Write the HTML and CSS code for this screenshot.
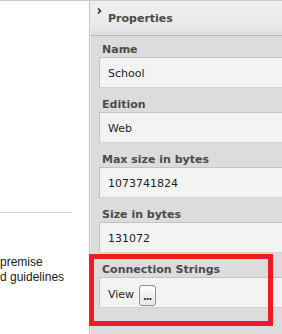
FILE: index.html
```html
<!DOCTYPE html>
<html>
<head>
<meta charset="utf-8">
<link rel="stylesheet" href="styles.css">
</head>
<body>
<div class="page">
  <div class="left">
    <div class="rule"></div>
    <p class="blurb">premise<br>d guidelines</p>
  </div>
  <div class="panel">
    <div class="panel-head">
      <svg class="chev" width="5" height="6" viewBox="0 0 5 6"><path d="M1 0.5 L3.5 3 L1 5.5" fill="none" stroke="#333" stroke-width="1.6"/></svg>
      <span class="title">Properties</span>
    </div>
    <div class="rows">
      <div class="row">
        <div class="label">Name</div>
        <div class="value">School</div>
      </div>
      <div class="row">
        <div class="label">Edition</div>
        <div class="value">Web</div>
      </div>
      <div class="row">
        <div class="label">Max size in bytes</div>
        <div class="value">1073741824</div>
      </div>
      <div class="row">
        <div class="label">Size in bytes</div>
        <div class="value">131072</div>
      </div>
      <div class="row">
        <div class="label">Connection Strings</div>
        <div class="value value-action"><span>View</span><button class="dots">...</button></div>
      </div>
    </div>
  </div>
  <div class="highlight"></div>
</div>
</body>
</html>
```

FILE: styles.css
```css
html, body {
  margin: 0;
  padding: 0;
  background: #ffffff;
}
body {
  width: 282px;
  height: 334px;
  overflow: hidden;
  font-family: "DejaVu Sans", Verdana, sans-serif;
}
.page {
  position: relative;
  display: flex;
  width: 282px;
  height: 334px;
  border-top: 1px solid #c9c9c9;
  box-sizing: border-box;
  overflow: hidden;
}
.left {
  width: 89px;
  flex: none;
  background: #ffffff;
  border-right: 1px solid #c4c4c4;
  overflow: hidden;
}
.rule {
  width: 72px;
  height: 1px;
  background: #d6d6d6;
  margin-top: 211px;
}
.blurb {
  margin: 42px 0 0 0;
  font-family: "Liberation Sans", Arial, sans-serif;
  font-size: 12px;
  line-height: 15px;
  color: #1a1a1a;
  white-space: nowrap;
}
.panel {
  flex: 1;
  min-width: 0;
  background: #dcdcdc;
  border-left: 1px solid #ebebeb;
}
.panel-head {
  height: 35px;
  box-sizing: border-box;
  border-bottom: 1px solid #b8b8b8;
  background: linear-gradient(#efefef, #e9e9e9 70%, #e0e0e0);
  display: flex;
  align-items: flex-start;
  padding-left: 6px;
}
.chev {
  margin-top: 7px;
  margin-right: 6px;
}
.title {
  font-weight: bold;
  font-size: 11px;
  line-height: 14px;
  color: #4a4a4a;
  margin-top: 11px;
}
.rows {
  display: flex;
  flex-direction: column;
  gap: 3px;
  padding-left: 8px;
}
.row {
  display: flex;
  flex-direction: column;
}
.label {
  height: 21px;
  box-sizing: border-box;
  padding: 7px 0 0 3px;
  font-weight: bold;
  font-size: 11px;
  line-height: 14px;
  color: #4b4b4b;
  white-space: nowrap;
}
.value {
  height: 31px;
  box-sizing: border-box;
  background: #f3f3f3;
  border-top: 1px solid #c3c3c3;
  border-left: 1px solid #c3c3c3;
  border-bottom: 1px solid #d0d0d0;
  padding: 9px 0 0 8px;
  font-size: 11px;
  line-height: 14px;
  color: #1e1e1e;
}
.value-action {
  display: flex;
  align-items: center;
  padding-top: 5px;
  gap: 5px;
}
.dots {
  width: 17px;
  height: 21px;
  padding: 0;
  margin: 0;
  border: 1px solid #8f8f8f;
  border-radius: 3px;
  background: linear-gradient(#fdfdfd, #e6e6e6);
  font-family: "DejaVu Sans", Verdana, sans-serif;
  font-weight: bold;
  font-size: 10px;
  line-height: 14px;
  color: #333;
  letter-spacing: -1px;
  text-indent: -1px;
  padding-top: 3px;
}
.highlight {
  position: absolute;
  left: 89px;
  top: 253px;
  width: 184px;
  height: 72px;
  box-sizing: border-box;
  border: 5px solid #ed1c24;
}
```
